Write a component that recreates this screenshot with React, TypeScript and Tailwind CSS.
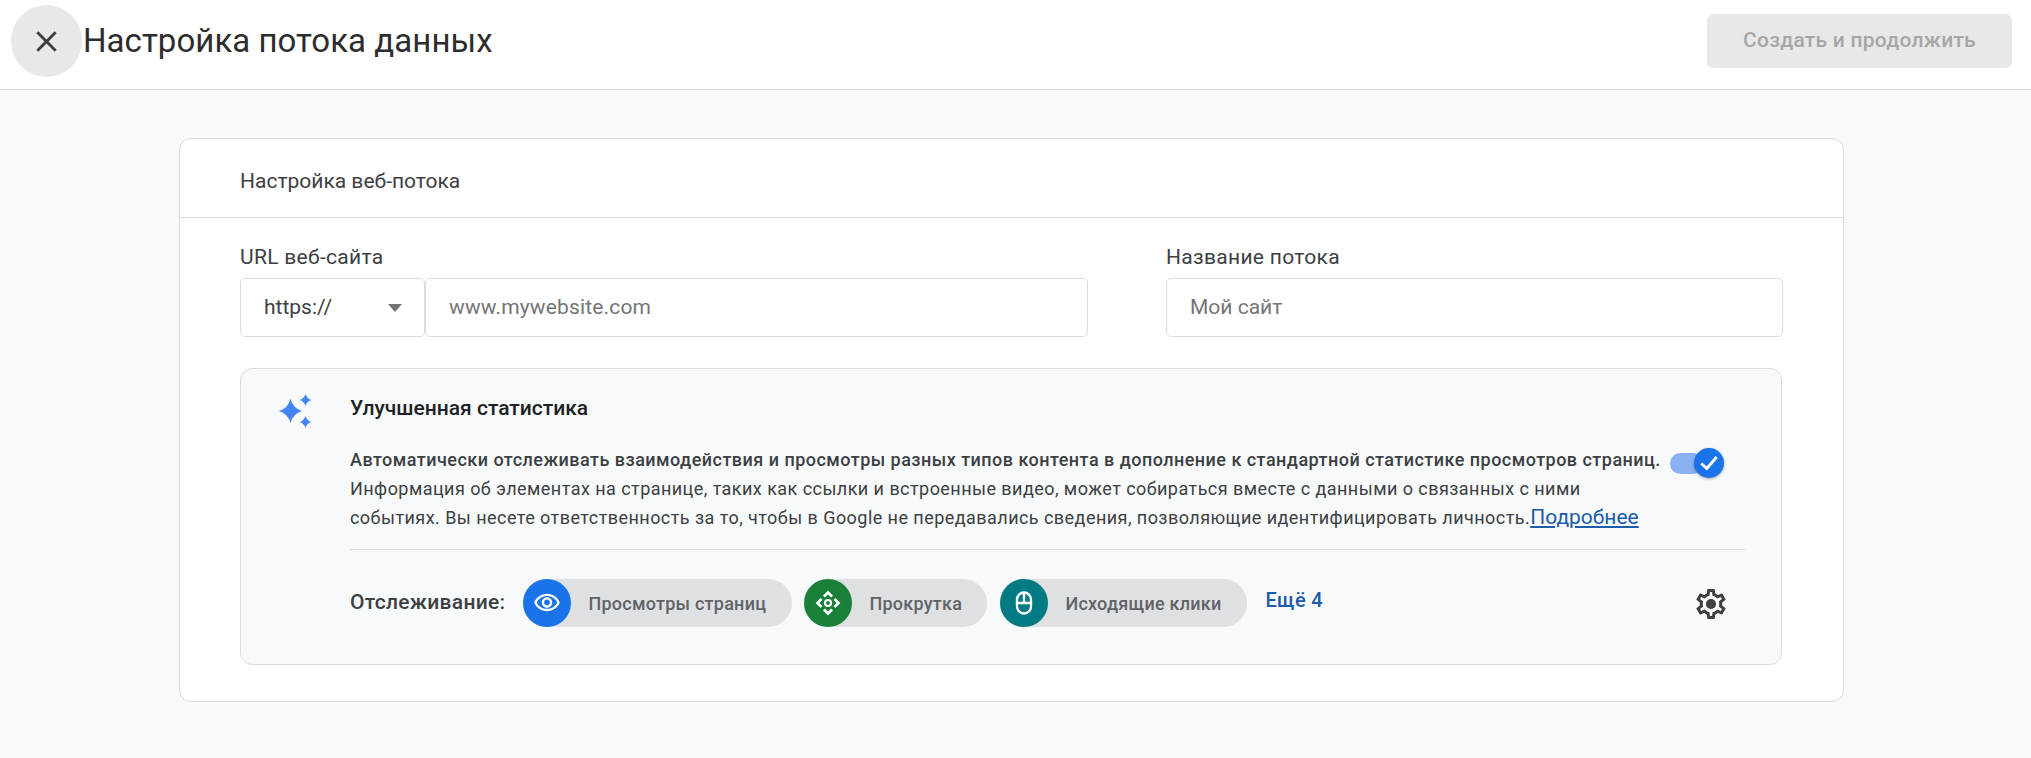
import React from "react";

function star(cx: number, cy: number, rx: number, ry: number) {
  const kx = rx * 0.22;
  const ky = ry * 0.22;
  return `M${cx} ${cy - ry}Q${cx + kx} ${cy - ky} ${cx + rx} ${cy}Q${cx + kx} ${cy + ky} ${cx} ${cy + ry}Q${cx - kx} ${cy + ky} ${cx - rx} ${cy}Q${cx - kx} ${cy - ky} ${cx} ${cy - ry}Z`;
}

export default function App() {
  return (
    <div className="min-h-screen bg-[#f8f9fa] font-['Roboto',sans-serif] text-[#202124] overflow-hidden">
      <header className="h-[90px] bg-white border-b border-[#dadce0] flex items-center pb-[7px] pl-[11px] pr-[19px]">
        <button className="w-[71px] h-[72px] rounded-full bg-[#e8e8e8] flex items-center justify-center text-[#3c4043]">
          <svg width="35" height="35" viewBox="0 0 24 24" fill="currentColor"><path d="M19 6.41 17.59 5 12 10.59 6.41 5 5 6.41 10.59 12 5 17.59 6.41 19 12 13.41 17.59 19 19 17.59 13.41 12z" /></svg>
        </button>
        <h1 className="ml-[1px] text-[33px] leading-[40px] font-normal text-[#2d2d2d] tracking-[0.05px]">Настройка потока данных</h1>
        <button className="ml-auto w-[305px] h-[54px] rounded-[6px] bg-[#e8e8e8] text-[#a6a6a6] text-[21px] font-medium tracking-[0.25px]">Создать и продолжить</button>
      </header>
      <main className="pt-[48px] pl-[179px]">
        <section className="w-[1665px] bg-white border border-[#dadce0] rounded-[12px]">
          <div className="h-[79px] border-b border-[#dadce0] pl-[60px] pt-[7px] flex items-center text-[21px] text-[#3c4043]">Настройка веб-потока</div>
          <div className="pl-[60px] pr-[61px] pt-[27px] pb-[36px]">
            <div className="grid grid-cols-[848px_617px] gap-x-[78px]">
              <div>
                <div className="text-[21px] leading-[24px] tracking-[0.3px] text-[#3c4043] mb-[9px]">URL веб-сайта</div>
                <div className="flex">
                  <div className="w-[185px] h-[59px] bg-white border border-[#dadce0] rounded-[5px] flex items-center pl-[23px] pr-[22px] justify-between text-[21px] text-[#3c4043]">
                    <span className="pt-px">https://</span>
                    <span className="w-0 h-0 border-x-[7px] border-x-transparent border-t-[8px] border-t-[#757575]" />
                  </div>
                  <div className="flex-1 h-[59px] bg-white border border-[#dadce0] rounded-[5px] flex items-center pl-[23px] pt-px text-[21px] text-[#757575] tracking-[0.15px]">www.mywebsite.com</div>
                </div>
              </div>
              <div>
                <div className="text-[21px] leading-[24px] tracking-[0.3px] text-[#3c4043] mb-[9px]">Название потока</div>
                <div className="h-[59px] bg-white border border-[#dadce0] rounded-[5px] flex items-center pl-[23px] pt-px text-[21px] text-[#757575]">Мой сайт</div>
              </div>
            </div>
            <div className="mt-[31px] bg-[#f8f9fa] border border-[#dadce0] rounded-[12px] flex pt-[25px] pb-[37px] pl-[38px] pr-[36px]">
              <svg className="shrink-0" width="33" height="34" viewBox="0 0 33 34" fill="#4285f4">
                <path d={star(11.5, 17, 11.5, 12)} />
                <path d={star(26.5, 6, 6, 6)} />
                <path d={star(26.5, 28, 6, 6)} />
              </svg>
              <div className="ml-[38px] flex-1">
                <div className="mt-[2px] text-[21px] leading-[24px] font-medium text-[#202124]">Улучшенная статистика</div>
                <div className="mt-[25px] text-[18px] leading-[29px] text-[#3c4043] pb-[17px] border-b border-[#dadce0] whitespace-nowrap tracking-[0.45px]">
                  <div className="flex items-start">
                    <span className="font-medium tracking-[0.47px]">Автоматически отслеживать взаимодействия и просмотры разных типов контента в дополнение к стандартной статистике просмотров страниц.</span>
                    <span className="relative mt-[8px] ml-[9px] block w-[34px] h-[21px] rounded-full bg-[#8ab1f4]">
                      <span className="absolute left-[24px] -top-[5px] w-[30px] h-[30px] rounded-full bg-[#1a73e8] shadow-[0_1px_3px_rgba(0,0,0,0.35)] flex items-center justify-center">
                        <svg width="22" height="22" viewBox="0 0 20 20" fill="none" stroke="white" strokeWidth="2.6"><path d="M3 10.5 8 15 17 4.5" /></svg>
                      </span>
                    </span>
                  </div>
                  <div>Информация об элементах на странице, таких как ссылки и встроенные видео, может собираться вместе с данными о связанных с ними</div>
                  <div>событиях. Вы несете ответственность за то, чтобы в Google не передавались сведения, позволяющие идентифицировать личность.<a className="text-[#1a5ca8] underline text-[21px] tracking-normal">Подробнее</a></div>
                </div>
                <div className="mt-[29px] flex items-center">
                  <span className="text-[21px] font-medium text-[#3c4043] tracking-[0.3px] mr-[18px]">Отслеживание:</span>
                  <div className="w-[269px] h-[48px] rounded-full bg-[#dfe0e2] flex items-center">
                    <span className="w-[48px] h-[48px] rounded-full bg-[#1a73e8] flex items-center justify-center">
                      <svg width="28" height="28" viewBox="0 0 24 24" fill="white"><path d="M12 6c3.79 0 7.17 2.13 8.82 5.5C19.17 14.87 15.79 17 12 17s-7.17-2.13-8.82-5.5C4.83 8.13 8.21 6 12 6m0-2C7 4 2.73 7.11 1 11.5 2.73 15.89 7 19 12 19s9.27-3.11 11-7.5C21.27 7.11 17 4 12 4zm0 5c1.38 0 2.5 1.12 2.5 2.5S13.38 14 12 14s-2.5-1.12-2.5-2.5S10.62 9 12 9m0-2c-2.48 0-4.5 2.02-4.5 4.5S9.52 16 12 16s4.5-2.02 4.5-4.5S14.48 7 12 7z" /></svg>
                    </span>
                    <span className="ml-[17px] text-[18px] font-medium text-[#5f6368] tracking-[0.25px]">Просмотры страниц</span>
                  </div>
                  <div className="ml-[12px] w-[183px] h-[48px] rounded-full bg-[#dfe0e2] flex items-center">
                    <span className="w-[48px] h-[48px] rounded-full bg-[#188038] flex items-center justify-center">
                      <svg width="28" height="28" viewBox="0 0 24 24" fill="none" stroke="white" strokeWidth="2.3"><path d="M8.5 6.5 12 3l3.5 3.5M8.5 17.5 12 21l3.5-3.5M6.5 8.5 3 12l3.5 3.5M17.5 8.5 21 12l-3.5 3.5" /><circle cx="12" cy="12" r="2.6" strokeWidth="1.8" /></svg>
                    </span>
                    <span className="ml-[17px] text-[18px] font-medium text-[#5f6368] tracking-[0.25px]">Прокрутка</span>
                  </div>
                  <div className="ml-[13px] w-[247px] h-[48px] rounded-full bg-[#dfe0e2] flex items-center">
                    <span className="w-[48px] h-[48px] rounded-full bg-[#007b83] flex items-center justify-center">
                      <svg width="28" height="28" viewBox="0 0 24 24" fill="none" stroke="white" strokeWidth="2"><rect x="6" y="3" width="12" height="18" rx="6" /><path d="M6 12h12M12 3v9" /></svg>
                    </span>
                    <span className="ml-[17px] text-[18px] font-medium text-[#5f6368] tracking-[0.25px]">Исходящие клики</span>
                  </div>
                  <a className="ml-[18px] mb-[6px] text-[20px] font-medium text-[#1a5ca8] tracking-[0.4px]">Ещё 4</a>
                  <svg className="ml-auto mr-[16px] mt-[2px]" width="36" height="36" viewBox="0 0 24 24" fill="#3c4043"><path d="M19.43 12.98c.04-.32.07-.64.07-.98 0-.34-.03-.66-.07-.98l2.11-1.65c.19-.15.24-.42.12-.64l-2-3.46c-.09-.16-.26-.25-.44-.25-.06 0-.12.01-.17.03l-2.49 1c-.52-.4-1.08-.73-1.69-.98l-.38-2.65C14.46 2.18 14.25 2 14 2h-4c-.25 0-.46.18-.49.42l-.38 2.65c-.61.25-1.17.59-1.69.98l-2.49-1c-.06-.02-.12-.03-.18-.03-.17 0-.34.09-.43.25l-2 3.46c-.13.22-.07.49.12.64l2.11 1.65c-.04.32-.07.65-.07.98 0 .33.03.66.07.98l-2.11 1.65c-.19.15-.24.42-.12.64l2 3.46c.09.16.26.25.44.25.06 0 .12-.01.17-.03l2.49-1c.52.4 1.08.73 1.69.98l.38 2.65c.03.24.24.42.49.42h4c.25 0 .46-.18.49-.42l.38-2.65c.61-.25 1.17-.59 1.69-.98l2.49 1c.06.02.12.03.18.03.17 0 .34-.09.43-.25l2-3.46c.12-.22.07-.49-.12-.64l-2.11-1.65zm-1.98-1.71c.04.31.05.52.05.73 0 .21-.02.43-.05.73l-.14 1.13.89.7 1.08.84-.7 1.21-1.27-.51-1.04-.42-.9.68c-.43.32-.84.56-1.25.73l-1.06.43-.16 1.13-.2 1.35h-1.4l-.19-1.35-.16-1.13-1.06-.43c-.43-.18-.83-.41-1.23-.71l-.91-.7-1.06.43-1.27.51-.7-1.21 1.08-.84.89-.7-.14-1.13c-.03-.31-.05-.54-.05-.74s.02-.43.05-.73l.14-1.13-.89-.7-1.08-.84.7-1.21 1.27.51 1.04.42.9-.68c.43-.32.84-.56 1.25-.73l1.06-.43.16-1.13.2-1.35h1.39l.19 1.35.16 1.13 1.06.43c.43.18.83.41 1.23.71l.91.7 1.06-.43 1.27-.51.7 1.21-1.07.85-.89.7.14 1.13z" /><circle cx="12" cy="12" r="3.4" /></svg>
                </div>
              </div>
            </div>
          </div>
        </section>
      </main>
    </div>
  );
}
